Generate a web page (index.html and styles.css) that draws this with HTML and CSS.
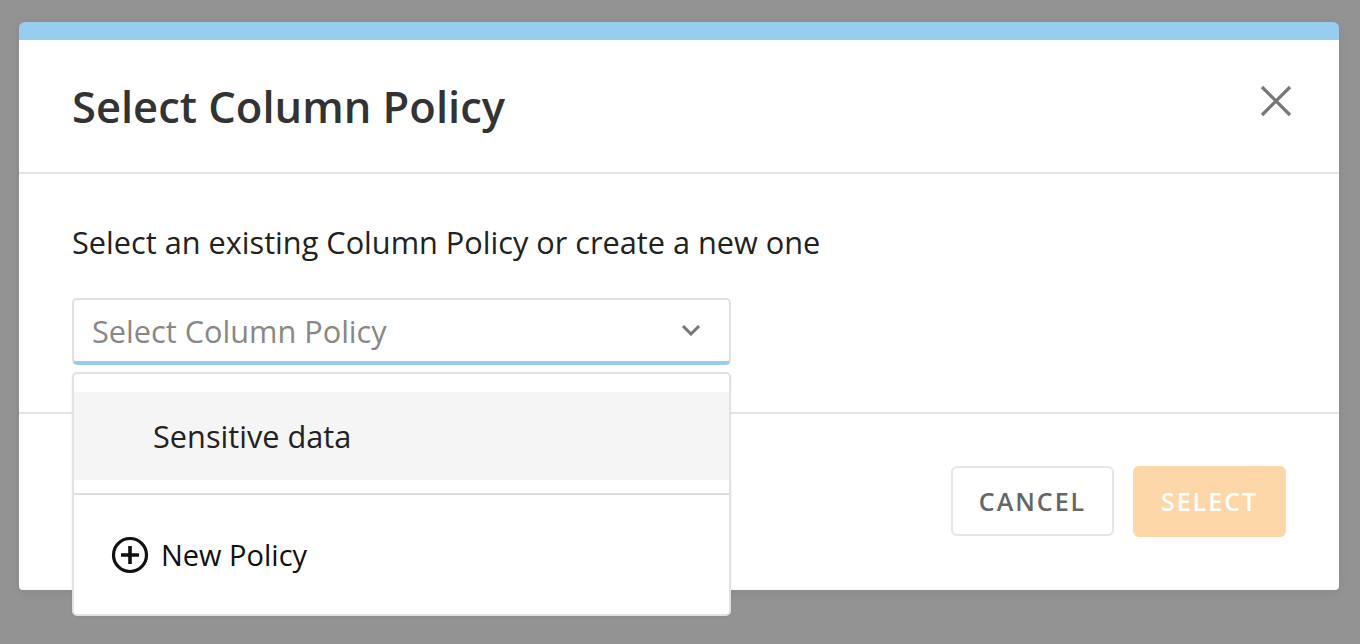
FILE: index.html
```html
<!DOCTYPE html>
<html lang="en">
<head>
    <meta charset="UTF-8">
    <title>Select Column Policy</title>
    <link rel="stylesheet" href="styles.css">
</head>
<body>
    <div class="overlay">
        <div class="modal">
            <div class="modal-header">
                <h2 class="modal-title">Select Column Policy</h2>
                <button class="close-btn" aria-label="Close">
                    <svg width="34" height="34" viewBox="0 0 34 34">
                        <path d="M3 3 L31 31 M31 3 L3 31" stroke="#777" stroke-width="3.2" fill="none"/>
                    </svg>
                </button>
            </div>

            <div class="modal-body">
                <p class="hint">Select an existing Column Policy or create a new one</p>

                <div class="policy-select">
                    <div class="select-box">
                        <span class="placeholder">Select Column Policy</span>
                        <svg class="chevron" width="20" height="12" viewBox="0 0 20 12">
                            <path d="M2 2 L10 10 L18 2" stroke="#777" stroke-width="3" fill="none"/>
                        </svg>
                    </div>

                    <div class="dropdown">
                        <div class="option active">Sensitive data</div>
                        <div class="new-policy">
                            <svg width="38" height="38" viewBox="0 0 38 38">
                                <circle cx="19" cy="19" r="16.5" stroke="#111" stroke-width="3.2" fill="none"/>
                                <path d="M19 10 V28 M10 19 H28" stroke="#111" stroke-width="3.6"/>
                            </svg>
                            <span>New Policy</span>
                        </div>
                    </div>
                </div>
            </div>

            <div class="modal-footer">
                <button class="btn btn-cancel">Cancel</button>
                <button class="btn btn-select" disabled>Select</button>
            </div>
        </div>
    </div>
</body>
</html>
```

FILE: styles.css
```css
html, body {
    margin: 0;
    height: 100%;
}
body {
    font-family: 'Open Sans', 'Noto Sans', sans-serif;
    background-color: #939393;
    color: #222;
    overflow: hidden;
}
.overlay {
    padding: 22px 21px 0 19px;
}
.modal {
    background-color: #fff;
    border-top: 18px solid #99cdef;
    border-radius: 6px 6px 4px 4px;
    box-shadow: 0 2px 10px rgba(0,0,0,0.08);
}

/* header */
.modal-header {
    display: flex;
    align-items: center;
    justify-content: space-between;
    height: 134px;
    padding: 0 46px 0 53px;
    border-bottom: 2px solid #e4e4e4;
    box-sizing: border-box;
}
.modal-title {
    margin: 0;
    font-size: 43.5px;
    font-weight: 600;
    color: #333;
}
.close-btn {
    background: none;
    border: none;
    padding: 0;
    cursor: pointer;
    display: flex;
    margin-top: -10px;
}

/* body */
.modal-body {
    height: 240px;
    padding: 48px 53px 0;
    box-sizing: border-box;
    border-bottom: 2px solid #e4e4e4;
}
.hint {
    margin: 0 0 36px;
    font-size: 30.7px;
    line-height: 40px;
    color: #222;
}
.policy-select {
    position: relative;
    width: 659px;
}
.select-box {
    display: flex;
    align-items: center;
    justify-content: space-between;
    height: 67px;
    padding: 0 28px 0 18px;
    border: 2px solid #e0e0e0;
    border-bottom: 4px solid #99cdef;
    border-radius: 5px;
    box-sizing: border-box;
}
.placeholder {
    font-size: 30.7px;
    color: #888;
}
.chevron {
    margin-top: -2px;
}

/* option list, drawn over the footer */
.dropdown {
    position: absolute;
    top: 74px;
    left: 0;
    right: 0;
    background-color: #fff;
    border: 2px solid #e2e2e2;
    border-radius: 5px;
    padding-top: 18px;
    box-shadow: 0 1px 3px rgba(0,0,0,0.06);
    z-index: 2;
}
.option {
    height: 88px;
    display: flex;
    align-items: center;
    padding-left: 79px;
    font-size: 30.7px;
    color: #222;
}
.option.active {
    background-color: #f5f5f5;
}
.new-policy {
    margin-top: 13px;
    border-top: 2px solid #dedede;
    height: 119px;
    display: flex;
    align-items: center;
    gap: 12px;
    padding-left: 37px;
    font-size: 29px;
    color: #111;
}

/* footer */
.modal-footer {
    display: flex;
    justify-content: flex-end;
    align-items: center;
    gap: 19px;
    height: 176px;
    padding: 0 53px 2px 0;
    box-sizing: border-box;
}
.btn {
    font-family: 'Open Sans', 'Noto Sans', sans-serif;
    font-size: 25px;
    font-weight: 600;
    letter-spacing: 2px;
    text-transform: uppercase;
    border-radius: 6px;
    cursor: pointer;
}
.btn-cancel {
    width: 163px;
    height: 70px;
    background-color: #fff;
    border: 2px solid #e6e6e6;
    color: #666;
}
.btn-select {
    width: 153px;
    height: 71px;
    background-color: #fed7a8;
    border: none;
    color: #fff;
}
```
